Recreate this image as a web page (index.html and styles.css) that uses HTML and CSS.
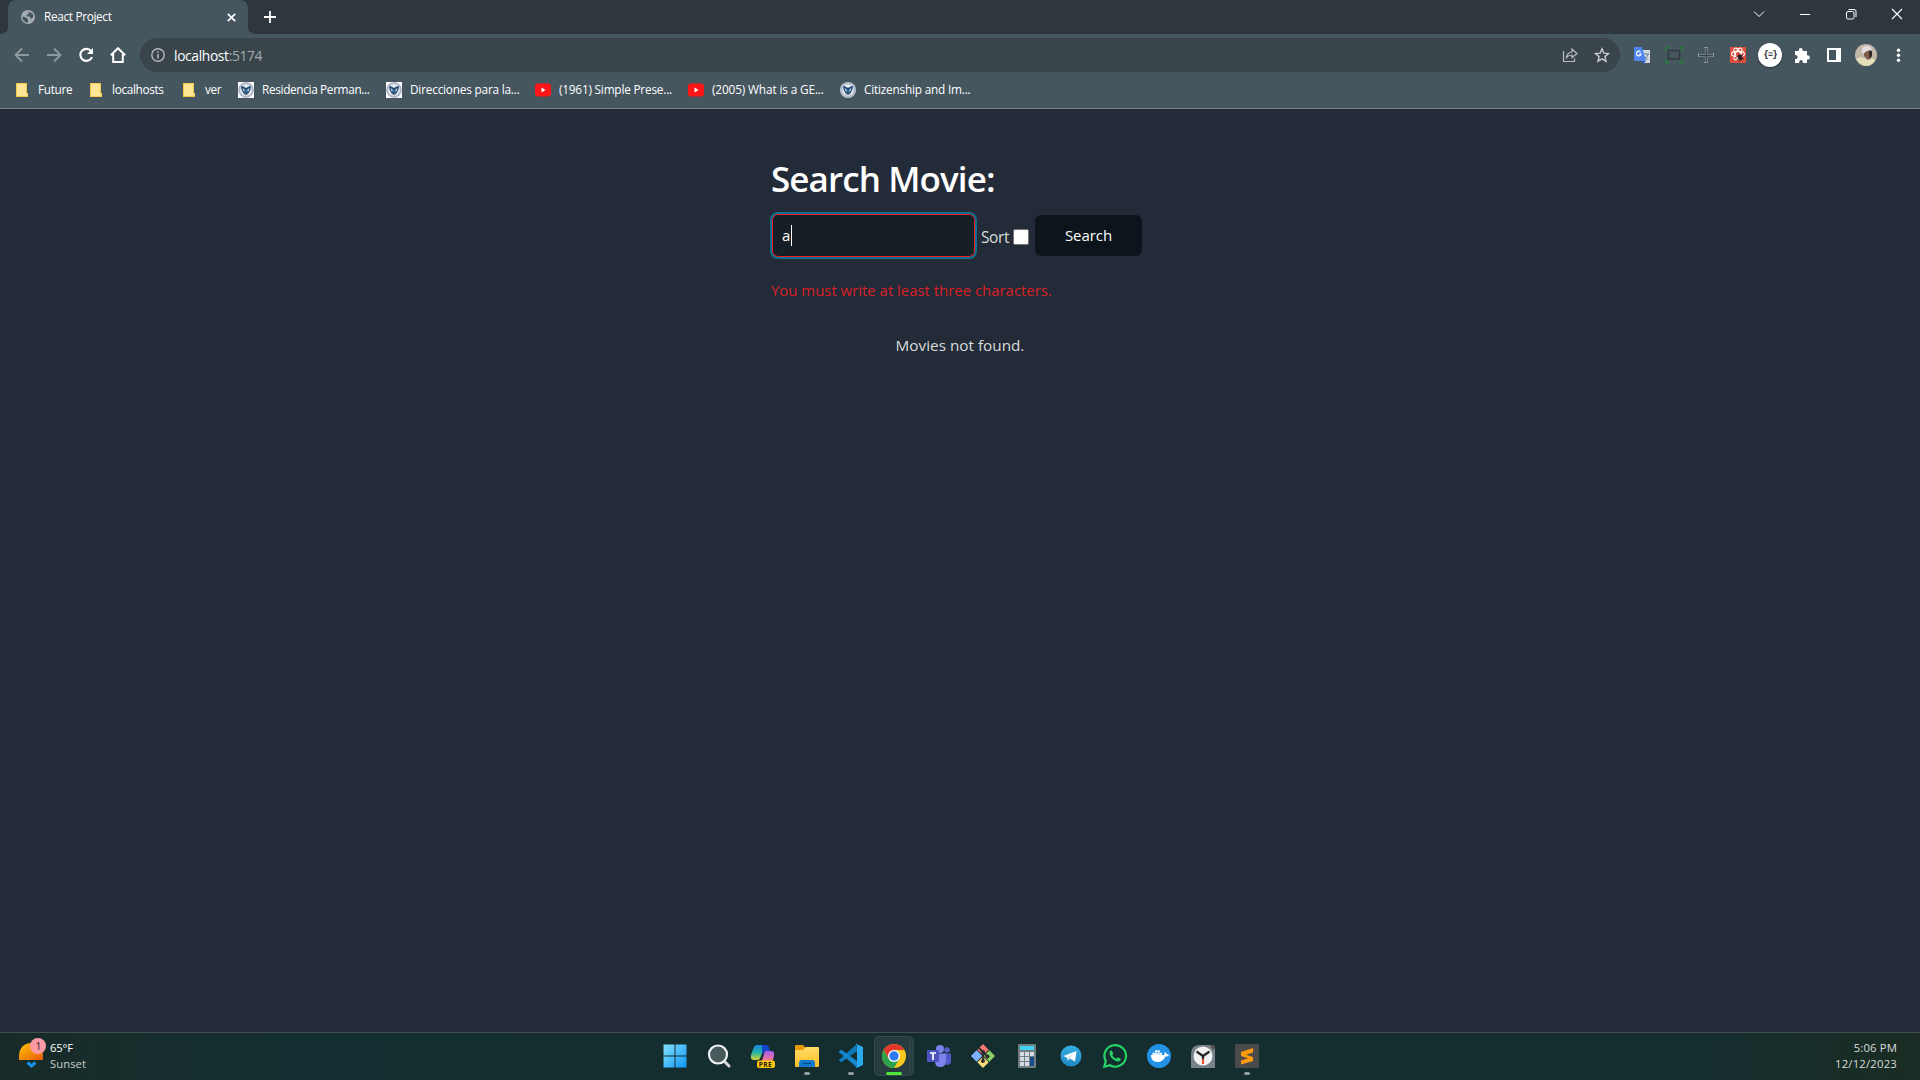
FILE: index.html
```html
<!DOCTYPE html>
<html lang="en">
<head>
<meta charset="utf-8">
<title>React Project</title>
<link rel="stylesheet" href="styles.css">
</head>
<body>
<svg class="defs" width="0" height="0">
  <defs>
    <linearGradient id="win" gradientUnits="userSpaceOnUse" x1="0" y1="0" x2="24" y2="24"><stop offset="0" stop-color="#86e3fd"/><stop offset="1" stop-color="#0a94f5"/></linearGradient>
    <linearGradient id="sun" x1="0" y1="0" x2="1" y2="1"><stop offset="0" stop-color="#ffc20c"/><stop offset="1" stop-color="#e75c05"/></linearGradient>
    <linearGradient id="copA" x1="0" y1="0" x2="0" y2="1"><stop offset="0" stop-color="#1783e0"/><stop offset=".5" stop-color="#25b3a5"/><stop offset="1" stop-color="#d9d433"/></linearGradient>
    <linearGradient id="copB" x1="0" y1="0" x2="0" y2="1"><stop offset="0" stop-color="#a65cf0"/><stop offset="1" stop-color="#f97b87"/></linearGradient>
    <linearGradient id="folder" x1="0" y1="0" x2="0" y2="1"><stop offset="0" stop-color="#ffdb68"/><stop offset="1" stop-color="#fdbf26"/></linearGradient>
    <linearGradient id="tele" x1="0" y1="0" x2="0" y2="1"><stop offset="0" stop-color="#37aee2"/><stop offset="1" stop-color="#1e88c4"/></linearGradient>
    <symbol id="bfolder" viewBox="0 0 16 16"><path d="M0 1h11v10h1v4H0z" fill="#f2ca4b"/><path d="M1 2h9v12H1z" fill="#ffe697"/><path d="M10 11h1.500v3H10z" fill="#ffdc6b"/></symbol>
    <symbol id="seal" viewBox="0 0 16 16"><circle cx="8" cy="8" r="8" fill="#c3cbd6"/><circle cx="8" cy="8" r="6.800" fill="none" stroke="#8f9fb5" stroke-width="1" stroke-dasharray="1 .8"/><circle cx="8" cy="8" r="5.600" fill="#e8edf1"/><path d="M3 4l2.500.5L8 6l2.500-1.500L13 4l-.5 3.500-1.500 3L8 13l-3-2.500-1.500-3z" fill="#204b78"/><path d="M4.500 6L7 8h2l2.500-2-1 3L8 10 5.500 9z" fill="#dbe7ed"/><path d="M6.500 8h3v2L8 11.500 6.500 10z" fill="#37658d"/><path d="M5.500 11.500l1 1m4-1l-1 1" stroke="#c45c60"/></symbol>
    <symbol id="youtube" viewBox="0 0 16 16"><rect y="1.500" width="16" height="13" rx="3" fill="#ff1515"/><path d="M6.500 5.500v5l4-2.500z" fill="#fff"/></symbol>
  </defs>
</svg>
<div class="screen">
  <header class="browser">
    <div class="tabstrip">
      <svg class="flare" viewBox="0 0 8 8"><path d="M8 0v8H0q8 0 8-8z" fill="#46565f"/></svg>
      <div class="tab">
        <svg class="globe" viewBox="0 0 16 16"><circle cx="8" cy="8" r="7" fill="#a5abb0"/><path d="M2.500 7.500l3.500 1 2 1.800v3.200C4.500 13.500 2 11 2.500 7.500zM8.200 2.600L13 5l.3 3-2.300 2-1.300-2.500H7L6.500 6l2.200-1z" fill="#46565f"/></svg>
        <span class="tab-title">React Project</span>
        <svg class="tab-close" viewBox="0 0 8 8"><path d="M.7.7l6.600 6.600M7.300.7L.7 7.300" stroke="#fff" stroke-width="1.500"/></svg>
      </div>
      <svg class="flare" viewBox="0 0 8 8"><path d="M0 0v8h8q-8 0-8-8z" fill="#46565f"/></svg>
      <svg class="plus" viewBox="0 0 12 12"><path d="M6 0v12M0 6h12" stroke="#fff" stroke-width="1.800"/></svg>
      <div class="window-controls">
        <svg viewBox="0 0 12 12"><path d="M1 3.500l5 5 5-5" fill="none" stroke="#fff"/></svg>
        <svg viewBox="0 0 12 12"><path d="M1 6.500h10" stroke="#fff"/></svg>
        <svg viewBox="0 0 12 12"><rect x="1.500" y="3.500" width="7.500" height="7.500" rx="1.500" fill="none" stroke="#fff"/><path d="M3.500 1.500H9q2 0 2 2V9" fill="none" stroke="#fff"/></svg>
        <svg viewBox="0 0 12 12"><path d="M1 1l10 10M11 1L1 11" stroke="#fff" stroke-width="1.100"/></svg>
      </div>
    </div>
    <div class="toolbar">
      <div class="nav">
        <svg viewBox="0 0 16 16"><path d="M15 8H2M8 1.500L1.500 8 8 14.500" fill="none" stroke="#8e999e" stroke-width="1.900"/></svg>
        <svg viewBox="0 0 16 16"><path d="M1 8h13M8 1.500L14.500 8 8 14.500" fill="none" stroke="#8e999e" stroke-width="1.900"/></svg>
        <svg viewBox="0 0 16 16"><path d="M13.200 4.300A6 6 0 1 0 14 10" fill="none" stroke="#fff" stroke-width="2.100"/><path d="M15 1v6H9z" fill="#fff"/></svg>
        <svg viewBox="0 0 16 16"><path d="M.8 8.200L8 1.200l7.200 7M3.200 7v8h9.600V7" fill="none" stroke="#fff" stroke-width="2"/></svg>
      </div>
      <div class="omnibox">
        <svg class="info" viewBox="0 0 14 14"><circle cx="7" cy="7" r="6.200" fill="none" stroke="#b4babd" stroke-width="1.400"/><path d="M7 6v4.500M7 3.300v1.500" stroke="#b4babd" stroke-width="1.500"/></svg>
        <span class="url">localhost<span class="port">:5174</span></span>
        <svg class="share" viewBox="0 0 16 16"><path d="M1.500 4v10.500h11v-3M4.500 10.500C5 6.800 7 5.300 10 5V2l5 4.500-5 4.300V8c-2.500 0-4 .7-5.500 2.500z" fill="none" stroke="#b6bcbf" stroke-width="1.200"/></svg>
        <svg class="star" viewBox="0 0 16 16"><path d="M8 1.800l1.800 4.300 4.700.4-3.600 3.100 1.100 4.600L8 11.800l-4 2.400 1.100-4.600L1.500 6.500l4.700-.4z" fill="none" stroke="#c7cccf" stroke-width="1.400"/></svg>
      </div>
      <div class="extensions">
        <svg viewBox="0 0 24 24"><path d="M10 7h10v13h-6z" fill="#d4dade"/><path d="M13 11h6m-3-1v1m2 0c-.5 3-3 5-5 6m1-4l4 4" fill="none" stroke="#6d8499"/><path d="M4 4h8l4 14H4z" fill="#4f86ee"/><path d="M12 18h4l-3 3z" fill="#3656cf"/><path d="M10.500 9A2.300 2.300 0 1 0 11 11H9" fill="none" stroke="#fff" stroke-width="1.200"/></svg>
        <svg viewBox="0 0 24 24"><rect x="6.500" y="7.500" width="11" height="8.500" fill="none" stroke="#30383b" stroke-width="1.400"/><path d="M4 8V4.500h3M17 4.500h3V8M4 16v3.500h3M17 19.500h3V16" fill="none" stroke="#247f35" stroke-width="1.500"/></svg>
        <svg viewBox="0 0 24 24"><path d="M10 4.500h4M10 19.500h4M4.500 10v4M19.500 10v4" stroke="#8b969a"/><path d="M5 11.500h6.500V5M5 13.500h6.500V19M13.500 5v6.500H19M13.500 19v-5.500H19" fill="none" stroke="#7b878c" stroke-width=".8"/><path d="M5 12.500h14M12.500 5v14" stroke="#384246"/></svg>
        <svg viewBox="0 0 24 24"><path d="M4 4h16v16H4z" fill="#df4d3d"/><g fill="none" stroke="#fff" stroke-width="1.100"><ellipse cx="12" cy="11" rx="6.500" ry="2.600"/><ellipse cx="12" cy="11" rx="6.500" ry="2.600" transform="rotate(60 12 11)"/><ellipse cx="12" cy="11" rx="6.500" ry="2.600" transform="rotate(120 12 11)"/></g><ellipse cx="14" cy="14.500" rx="2.400" ry="3.200" fill="#35201f" transform="rotate(-25 14 14)"/><path d="M10 13l8 3m-7 1l6-5m-4 7l2-8" stroke="#35201f" stroke-width=".8"/></svg>
        <span class="json-badge">{≡}</span>
        <svg viewBox="0 0 24 24"><path d="M5 8h4C7.800 4.500 13 3.500 12.800 8H17v4.200c4.200-.4 3.500 5 0 4.300V20h-4.200c.5-4-4-4-3.600 0H5v-4c3.500.4 3.500-4.400 0-4z" fill="#fff"/></svg>
        <svg viewBox="0 0 24 24"><path d="M5 5h14v14H5zM7 7v10h7V7z" fill="#fff" fill-rule="evenodd"/></svg>
        <svg class="avatar" viewBox="0 0 22 22"><circle cx="11" cy="11" r="11" fill="#bfb6a6"/><path d="M1 15q4-3 8-1l3 2 4-2q4 1 4 3-4 5-9 5T1 15z" fill="#e5dfb9"/><path d="M9 6l5-1 3 4-1 5-3 2-4-4z" fill="#805a4a"/><path d="M14 6l3 1v5l-2 3-1-4z" fill="#362b2b"/><path d="M7 8q-1-6 4-6 5-.5 6 4l-5 1-4 3z" fill="#e5dcdf"/></svg>
        <svg class="menu" viewBox="0 0 24 24"><g fill="#fff"><circle cx="12.500" cy="7.300" r="1.700"/><circle cx="12.500" cy="12.300" r="1.700"/><circle cx="12.500" cy="17.300" r="1.700"/></g></svg>
      </div>
    </div>
    <nav class="bookmarks">
      <a class="bm bm-future"><svg><use href="#bfolder"/></svg><span>Future</span></a>
      <a class="bm bm-local"><svg><use href="#bfolder"/></svg><span>localhosts</span></a>
      <a class="bm bm-ver"><svg><use href="#bfolder"/></svg><span>ver</span></a>
      <a class="bm bm-res"><svg class="boxed"><use href="#seal"/></svg><span>Residencia Perman...</span></a>
      <a class="bm bm-dir"><svg class="boxed"><use href="#seal"/></svg><span>Direcciones para la...</span></a>
      <a class="bm bm-yt1"><svg><use href="#youtube"/></svg><span>(1961) Simple Prese...</span></a>
      <a class="bm bm-yt2"><svg><use href="#youtube"/></svg><span>(2005) What is a GE...</span></a>
      <a class="bm bm-cit"><svg><use href="#seal"/></svg><span>Citizenship and Im...</span></a>
    </nav>
  </header>
  <main class="page">
    <section class="finder">
      <h1>Search Movie:</h1>
      <form class="search">
        <div class="field"><span>a</span><i class="caret"></i></div>
        <label class="sort">Sort</label>
        <span class="checkbox"></span>
        <button class="submit" type="button">Search</button>
      </form>
      <p class="error"><span>You must write at least three characters.</span></p>
    </section>
    <p class="empty">Movies not found.</p>
  </main>
  <footer class="taskbar">
    <div class="weather">
      <svg viewBox="0 0 28 32"><path d="M1 23v-4C1 10 7 6 13 6s12 4 12 13v4z" fill="url(#sun)"/><path d="M9.500 25.500l4 3.500 4-3.500" fill="none" stroke="#1590e8" stroke-width="3"/><circle cx="20" cy="9" r="8" fill="#fd9ba5"/><text x="17.200" y="13.300" class="badge-text">1</text></svg>
      <div class="weather-text"><span class="temp">65°F</span><span class="cond">Sunset</span></div>
    </div>
    <div class="apps">
      <div class="app"><svg viewBox="0 0 24 24"><path d="M.5.500h11v11H.5zM12.500.500h11v11h-11zM.5 12.500h11v11H.5zM12.500 12.500h11v11h-11z" fill="url(#win)"/></svg></div>
      <div class="app"><svg viewBox="0 0 24 24"><path d="M17 17l5 5" stroke="#d6d6dc" stroke-width="3" stroke-linecap="round"/><circle cx="11" cy="10.500" r="9" fill="#465a5c" stroke="#f0f1f3" stroke-width="2.200"/></svg></div>
      <div class="app"><svg viewBox="0 0 24 24"><path d="M6 1h8q3 0 2.500 3L13 7q-2 1-3 5-1 4-4 4H3q-4 0-3-5L2.500 4Q3.500 1 6 1z" fill="url(#copA)"/><path d="M11 1h4q2.500 0 3 3l1 3h-5l-3 4z" fill="#1747c9"/><path d="M15 7h5q4 0 3 5l-1.500 5H11l2-7q.5-3 2-3z" fill="url(#copB)"/><rect x="6" y="16.500" width="18" height="7.500" rx="2" fill="#fbc80f"/><text x="7.800" y="22.800" class="pre">PRE</text></svg></div>
      <div class="app running"><svg viewBox="0 0 24 24"><path d="M0 2q0-1 1-1h7l3 3v5H0z" fill="#e59b0c"/><path d="M0 6h8l3-3h12q1 0 1 1v18q0 1-1 1H1q-1 0-1-1z" fill="url(#folder)"/><path d="M4 23v-4q0-3 3-3h10q3 0 3 3v4z" fill="#1179cf"/><path d="M8 19.500h8" stroke="#0a4c8b" stroke-width="1.300"/></svg></div>
      <div class="app running"><svg viewBox="0 0 24 24"><path d="M17.500.200L18 7 2.300 18.200.2 16.800q-.5-.5 0-1z" fill="#0f79bd"/><path d="M18 23.500V17L2.300 5.800.2 7.200q-.5.500 0 1z" fill="#1687ce"/><path d="M17.500 0L24 3v18l-6.500 3-.8-.8q1.300.3 1.300-1.200V2q0-1.500-1.300-1.200z" fill="#2aa9ee"/></svg></div>
      <div class="app active"><svg viewBox="0 0 24 24"><circle cx="12" cy="12" r="12" fill="#fbc91d"/><path d="M1.600 6A12 12 0 0 1 22.400 6H12l-5.200 9z" fill="#e3392d"/><path d="M1.600 6A12 12 0 0 0 12 24l5.200-9H6.800z" fill="#2ca24c"/><circle cx="12" cy="12" r="6" fill="#fff"/><circle cx="12" cy="12" r="4.700" fill="#2e79ee"/></svg></div>
      <div class="app"><svg viewBox="0 0 24 24"><circle cx="20" cy="6" r="2.800" fill="#5360c6"/><path d="M16 9.500h8v8q0 3.500-5 3.500z" fill="#5059c9"/><circle cx="13" cy="5" r="4" fill="#7b83eb"/><path d="M8 9.500h11V17q0 6-6 6-5 0-5-6z" fill="#7b83eb"/><rect y="6" width="12" height="12" rx="1" fill="#4b53bc"/><path d="M3 9h6M6 9v7" stroke="#fff" stroke-width="1.700"/></svg></div>
      <div class="app"><svg viewBox="0 0 24 24"><g transform="rotate(45 12 12)"><path d="M3.500 3.500h8v8h-8z" fill="#fa7777"/><path d="M12.500 3.500h8v8h-8z" fill="#8bcf69"/><path d="M3.500 12.500h8v8h-8z" fill="#80b3ff"/><path d="M12.500 12.500h8v8h-8z" fill="#ffdd78"/></g><path d="M8 4l4 4v10M12 8l5 5" stroke="#2d2d2d" stroke-width="1.800" fill="none"/><g fill="#2d2d2d"><circle cx="12" cy="8" r="2"/><circle cx="12" cy="17" r="2"/><circle cx="16.500" cy="12.500" r="2"/></g></svg></div>
      <div class="app"><svg viewBox="0 0 24 24"><rect x="3" width="18" height="24" rx="1" fill="#727d84"/><path d="M5 2h14v4H5z" fill="#40d3ef"/><path d="M5 8h4v4H5zM10 8h4v4h-4zM15 8h4v4h-4zM5 13h4v4H5zM10 13h4v4h-4zM5 18h4v4H5zM10 18h4v4h-4z" fill="#d5dce1"/><path d="M15 13h4v9h-4z" fill="#164b8e"/></svg></div>
      <div class="app"><svg viewBox="0 0 24 24"><circle cx="12" cy="12" r="10.500" fill="url(#tele)"/><path d="M4.500 12L17.500 7 16 17.500l-5-3-2.500 2V14z" fill="#fff"/><path d="M8.500 14l6-4.500-4.500 5-1.500 2z" fill="#b8d6e9"/></svg></div>
      <div class="app"><svg viewBox="0 0 24 24"><path d="M1.300 22.800l1.500-5.700A10.800 10.800 0 1 1 7 21.300z" fill="none" stroke="#24d366" stroke-width="2.200"/><path d="M8.500 6.300c-.8 0-2 1-2 2.700 0 4 5 8.500 8.500 8.500 2 0 3-1.500 2.800-2.700l-3-1.500-1.500 1.500c-2-.8-3.300-2.200-4-3.800l1-1.200z" fill="#24d366"/></svg></div>
      <div class="app"><svg viewBox="0 0 24 24"><circle cx="12" cy="12" r="12" fill="#2391e6"/><path d="M4 11h13c1-1 .2-2 1-3 1 .6 1.500 1.500 1.500 2.300 1-.2 1.700 0 2.500.5-.7 1.500-2 1.700-3.500 1.700-1.500 3.500-4.500 5.500-8 5.500C6 18 4 15 4 11zM5.500 8.500H15V11H5.500zM8 6.200h5v2.500H8z" fill="#fff"/><path d="M8 8v3M10.400 6v5M12.800 6v5M5.500 8.500H15" stroke="#2391e6" stroke-width=".4"/></svg></div>
      <div class="app"><svg viewBox="0 0 24 24"><path d="M0 10Q0 1 9 1h14l1 3v20H0z" fill="#77828a"/><path d="M19 1h3q2 0 2 3l-2 2z" fill="#514c4a"/><circle cx="12" cy="12" r="9.500" fill="#f2f2f2"/><path d="M5.500 7.500L12 12l6.500-4.500" fill="none" stroke="#282828" stroke-width="2.300"/><path d="M12 12v8" stroke="#ed4a1d" stroke-width="2"/><path d="M12 11v4" stroke="#282828" stroke-width="2.300"/></svg></div>
      <div class="app running"><svg viewBox="0 0 24 24"><rect width="24" height="24" rx="1" fill="#4b4b4b"/><path d="M6 8l12-4v4.500l-7 2.300 7 2.200v4L6 20.500v-4l7-2.300L6 12z" fill="#ff9b0b"/></svg></div>
    </div>
    <div class="clock"><span class="time">5:06 PM</span><span class="date">12/12/2023</span></div>
  </footer>
</div>
</body>
</html>
```
FILE: styles.css
```css
* { box-sizing: border-box; }
body { margin: 0; overflow: hidden; background: #222b37; font-family: "Open Sans", "Noto Sans", sans-serif; }
svg { display: block; flex: none; }
.defs { position: absolute; }
.screen { width: 1920px; height: 1080px; display: flex; flex-direction: column; }
.browser { height: 109px; background: #46565f; border-bottom: 1px solid #75838a; color: #fff; }
.tabstrip { height: 34px; background: #2d373d; display: flex; }
.flare { width: 8px; height: 8px; align-self: flex-end; }
.tab { width: 240px; height: 34px; background: #46565f; border-radius: 8px 8px 0 0; display: flex; align-items: center; padding-left: 12px; }
.globe { width: 16px; height: 16px; }
.tab-title { margin: -2px 0 0 8px; width: 183px; font-size: 11.8px; letter-spacing: -.33px; white-space: nowrap; }
.tab-close { width: 9px; height: 9px; }
.plus { width: 12px; height: 12px; margin: 11px 0 0 8px; }
.window-controls { margin-left: auto; display: flex; gap: 34px; padding: 8px 17px 0 0; }
.window-controls svg { width: 12px; height: 12px; }
.toolbar { height: 42px; display: flex; align-items: center; }
.nav { display: flex; gap: 16px; padding-left: 14px; width: 140px; }
.nav svg { width: 16px; height: 16px; }
.omnibox { width: 1480px; height: 34px; border-radius: 17px; background: #39454b; display: flex; align-items: center; padding-left: 11px; }
.info { width: 14px; height: 14px; }
.url { margin-left: 9px; font-size: 13.8px; letter-spacing: -.35px; }
.port { color: #a3abaf; }
.share { width: 16px; height: 16px; margin-left: auto; }
.star { width: 16px; height: 16px; margin: 0 10px 0 16px; }
.extensions { display: flex; align-items: center; gap: 8px; padding-left: 10px; }
.extensions svg { width: 24px; height: 24px; }
.extensions .avatar { width: 22px; height: 22px; margin: 0 1px; }
.json-badge { width: 24px; height: 24px; border-radius: 50%; background: #fff; color: #20272b; display: flex; align-items: center; justify-content: center; font: bold 9px "Liberation Mono", monospace; letter-spacing: -1px; box-shadow: 0 1px 2px #26333a; }
.bookmarks { height: 28px; display: flex; align-items: center; padding-left: 16px; }
.bm { display: flex; align-items: center; white-space: nowrap; font-size: 11.8px; letter-spacing: -.34px; }
.bm span { margin-top: -2px; }
.bm svg { width: 16px; height: 16px; margin-right: 6px; }
.bm .boxed { background: #fff; margin-right: 8px; }
.bm-future { width: 74px; }
.bm-local { width: 93px; }
.bm-ver { width: 55px; }
.bm-res { width: 148px; }
.bm-dir { width: 149px; letter-spacing: -.2px; }
.bm-yt1 { width: 153px; letter-spacing: -.2px; }
.bm-yt2 { width: 152px; letter-spacing: -.13px; }
.bm-cit { letter-spacing: -.2px; }
.bm-yt1 svg, .bm-yt2 svg, .bm-cit svg { margin-right: 8px; }

.page { flex: 1; background: #222b37; color: #dbdbdb; display: flex; flex-direction: column; align-items: center; padding-top: 45px; }
.finder { width: 378px; font-size: 15.5px; }
h1 { margin: 0; color: #fff; font-size: 35px; line-height: 50px; font-weight: 600; letter-spacing: -.9px; white-space: nowrap; }
.search { display: flex; align-items: center; margin: 7px 0 0 -1px; height: 48px; }
.field { width: 207px; height: 47px; border: 2px solid #10708f; border-radius: 8px; background: #171f26; box-shadow: inset 0 0 0 1px #f01c24; padding-left: 10px; display: flex; align-items: center; color: #fff; font-size: 15px; }
.caret { width: 1px; height: 21px; background: #fff; margin-left: 1px; }
.sort { margin: 3px 0 0 4px; width: 32px; letter-spacing: -.4px; }
.checkbox { width: 16px; height: 16px; margin-top: 3px; background: #fff; border: 1px solid #767676; border-radius: 2px; }
.submit { width: 107px; height: 41px; margin: 0 0 0 6px; border: 0; border-radius: 6px; background: #0c151c; color: #fff; font: 15px "Open Sans", sans-serif; letter-spacing: -.05px; padding: 0; }
.error { margin: 19px 0 0; line-height: 24px; color: #db1f26; white-space: nowrap; font-size: 15px; letter-spacing: -.04px; }
.empty { margin: 31px 0 0; line-height: 24px; font-size: 15.3px; }

.taskbar { height: 48px; border-top: 1px solid #454e4e; background: linear-gradient(90deg, #182b28, #142f31 15%, #142d2e 55%, #152e30 88%, #1a2c23); color: #fff; display: grid; grid-template-columns: 653px 1fr 651px; }
.weather { display: flex; padding: 4px 0 0 18px; }
.weather > svg { width: 28px; height: 32px; }
.badge-text { font: 11px "Open Sans", sans-serif; fill: #40282b; }
.weather-text { display: flex; flex-direction: column; margin: 3px 0 0 4px; font-size: 11.2px; line-height: 16px; }
.temp { letter-spacing: -.15px; }
.cond { color: #c5cccc; letter-spacing: .1px; }
.apps { display: flex; }
.app { width: 44px; height: 47px; flex: none; display: flex; flex-direction: column; align-items: center; padding-top: 11px; }
.app svg { width: 24px; height: 24px; overflow: visible; }
.pre { font: bold 6.500px "Open Sans", sans-serif; letter-spacing: .4px; fill: #24200b; }
.app.running::after { content: ""; width: 6px; height: 3px; border-radius: 2px; background: #929d9e; margin-top: 4px; }
.app.active { width: 40px; height: 40px; margin: 3px 4px 0 0; padding: 7px 0 0 4px; border-radius: 5px; background: #263c3e; border: 1px solid #334a4b; border-right: 5px double #2f4446; }
.app.active { padding: 7px 0 0 3px; margin: 3px 3px 0 1px; width: 40px; }
.app.active::after { content: ""; width: 16px; height: 3px; border-radius: 2px; background: #4ee439; margin-top: 4px; }
.clock { display: flex; flex-direction: column; align-items: flex-end; padding: 7px 23px 0 0; font-size: 11.3px; line-height: 16px; color: #d7dcdc; }
.time { letter-spacing: .15px; }
.date { letter-spacing: .2px; }
```
